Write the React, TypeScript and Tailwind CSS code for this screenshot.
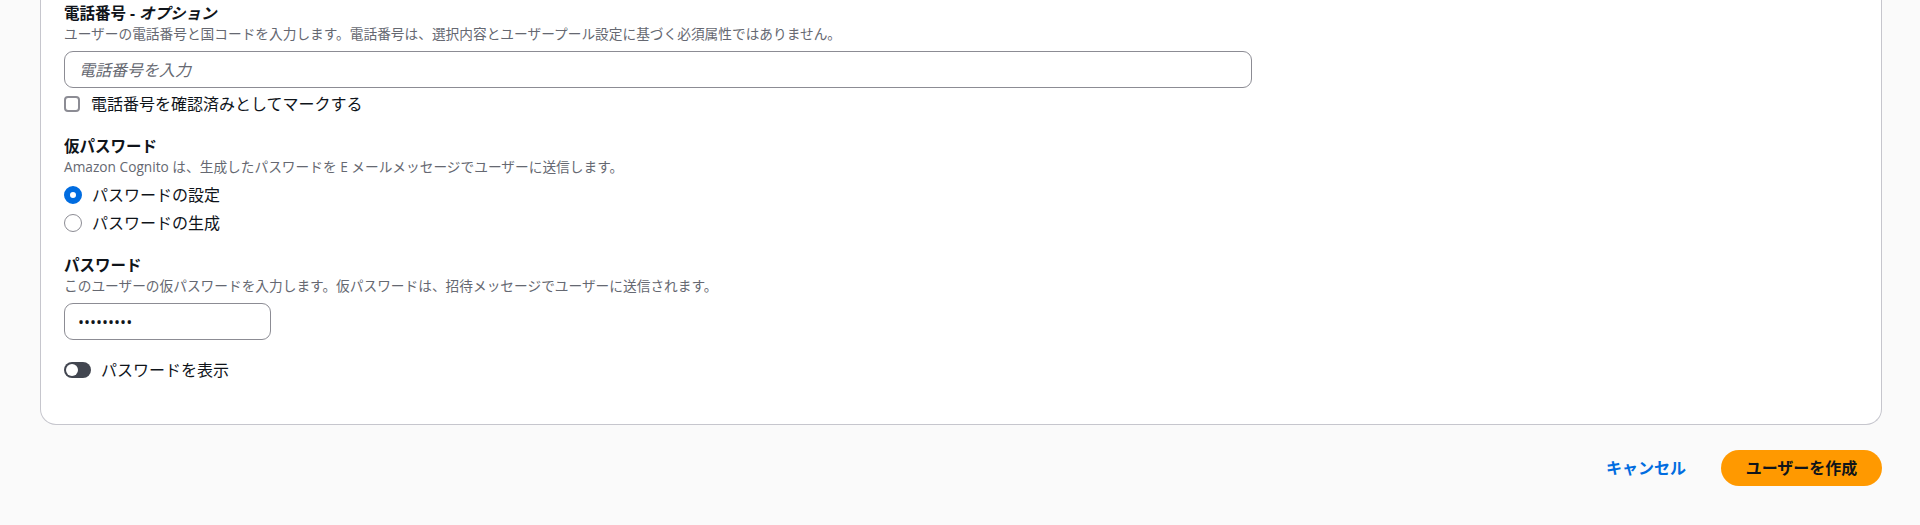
import React from 'react';

function FieldTitle({ children }: { children: React.ReactNode }) {
  return <div className="text-[15.5px] font-bold leading-[22px] text-[#0f141a]">{children}</div>;
}

function Description({ children }: { children: React.ReactNode }) {
  return <div className="text-[13.7px] leading-[20px] text-[#656871]">{children}</div>;
}

function Radio({ checked, label }: { checked?: boolean; label: string }) {
  return (
    <label className="flex h-6 items-center gap-[10px]">
      {checked ? (
        <span className="h-[18px] w-[18px] rounded-full border-[6px] border-[#006ce0] bg-white" />
      ) : (
        <span className="h-[18px] w-[18px] rounded-full border border-[#8c8c94] bg-white" />
      )}
      <span className="text-[16px] leading-6 text-[#0f141a]">{label}</span>
    </label>
  );
}

export default function App() {
  return (
    <div className="h-[525px] bg-[#fafafa] pl-10 pr-[38px] font-['Open_Sans','Noto_Sans_CJK_JP',sans-serif]">
      <div className="rounded-b-2xl border-x border-b border-[#c6c6cd] bg-white pb-[42px] pl-[23px] pt-[2px]">
        {/* phone number */}
        <FieldTitle>
          電話番号 - <i>オプション</i>
        </FieldTitle>
        <Description>
          ユーザーの電話番号と国コードを入力します。電話番号は、選択内容とユーザープール設定に基づく必須属性ではありません。
        </Description>
        <input
          className="mt-[7px] h-[37px] w-[1188px] rounded-[9px] border border-[#8c8c94] px-[14px] text-[16px] italic outline-none placeholder:text-[#656871]"
          placeholder="電話番号を入力"
        />
        <label className="mt-1 flex h-6 items-center gap-[11px]">
          <span className="h-4 w-4 rounded-[4px] border-2 border-[#8c8c94] bg-white" />
          <span className="text-[16px] leading-6 text-[#0f141a]">電話番号を確認済みとしてマークする</span>
        </label>

        {/* temporary password */}
        <div className="mt-[19px]">
          <FieldTitle>仮パスワード</FieldTitle>
          <Description>Amazon Cognito は、生成したパスワードを E メールメッセージでユーザーに送信します。</Description>
          <div className="mt-[6px] flex flex-col gap-1">
            <Radio checked label="パスワードの設定" />
            <Radio label="パスワードの生成" />
          </div>
        </div>

        {/* password */}
        <div className="mt-[19px]">
          <FieldTitle>パスワード</FieldTitle>
          <Description>このユーザーの仮パスワードを入力します。仮パスワードは、招待メッセージでユーザーに送信されます。</Description>
          <div className="mt-[7px] flex h-[37px] w-[207px] items-center rounded-[9px] border border-[#8c8c94] px-[13px] text-[16px] text-[#0f141a]">
            •••••••••
          </div>
          <label className="mt-[18px] flex h-6 items-center gap-[10px]">
            <span className="flex h-4 w-[27px] items-center rounded-full bg-[#424650] px-[2px]">
              <span className="h-3 w-3 rounded-full bg-white" />
            </span>
            <span className="text-[16px] leading-6 text-[#0f141a]">パスワードを表示</span>
          </label>
        </div>
      </div>

      <div className="mt-[25px] flex items-center justify-end gap-[35px]">
        <button className="text-[16px] font-bold leading-6 text-[#006ce0]">キャンセル</button>
        <button className="h-9 w-[161px] rounded-full bg-[#ff9900] text-[16px] font-bold text-[#0f141a]">
          ユーザーを作成
        </button>
      </div>
    </div>
  );
}
